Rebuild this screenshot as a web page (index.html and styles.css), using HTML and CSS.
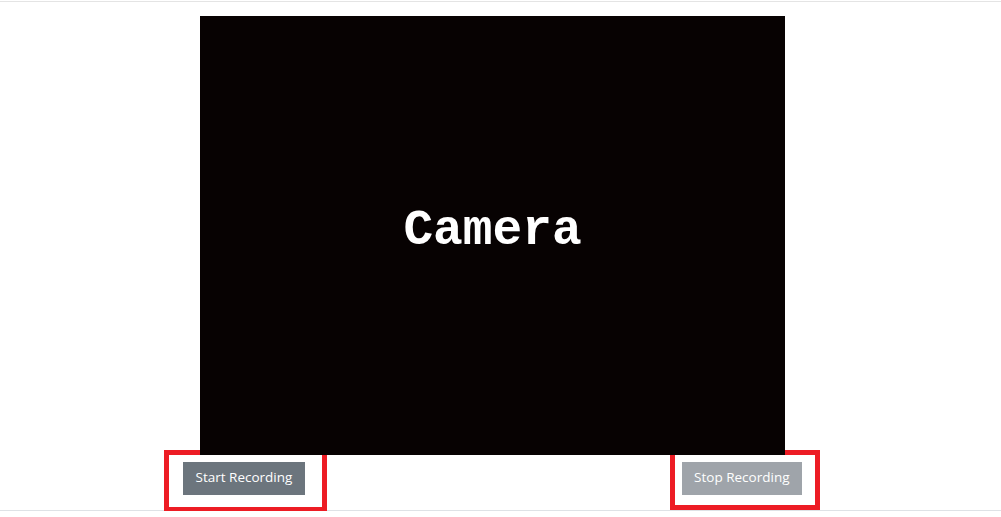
FILE: index.html
```html
<!DOCTYPE html>
<html lang="en">
<head>
<meta charset="utf-8">
<title>Camera Recorder</title>
<link rel="stylesheet" href="styles.css">
</head>
<body>
<main class="page">
  <section class="camera">
    <span class="camera-label">Camera</span>
  </section>
  <div class="controls">
    <div class="mark mark-start">
      <button class="btn" type="button">Start Recording</button>
    </div>
    <div class="mark mark-stop">
      <button class="btn btn-disabled" type="button" disabled>Stop Recording</button>
    </div>
  </div>
</main>
</body>
</html>
```

FILE: styles.css
```css
html, body {
  margin: 0;
  padding: 0;
  background: #ffffff;
}

body {
  padding-top: 1px;
  font-family: "Open Sans", "Liberation Sans", sans-serif;
}

.page {
  border-top: 1px solid #e4e4e4;
  border-bottom: 1px solid #dee2e6;
  padding-top: 14px;
}

.camera {
  position: relative;
  z-index: 1;
  width: 585px;
  height: 439px;
  margin-left: 200px;
  background: #070202;
  display: flex;
  align-items: center;
  justify-content: center;
}

.camera-label {
  font-family: "Liberation Mono", "DejaVu Sans Mono", monospace;
  font-weight: bold;
  font-size: 49.5px;
  color: #ffffff;
  margin-top: -10px;
}

.controls {
  display: flex;
  justify-content: space-between;
  align-items: flex-start;
  width: 656px;
  height: 60px;
  margin-top: -5px;
  margin-left: 164px;
}

.mark {
  border: 5px solid #ed1c24;
  display: flex;
  align-items: flex-start;
}

.mark-start {
  padding: 7px 17px 12px 14px;
}

.mark-stop {
  padding: 7px 13px 10px 7px;
}

.btn {
  height: 33px;
  padding: 0 12.5px 3px;
  border: 0;
  border-radius: 0;
  background: #6c757d;
  color: #ffffff;
  font-family: "Open Sans", "Liberation Sans", sans-serif;
  font-size: 13.5px;
  display: flex;
  align-items: center;
  justify-content: center;
}

.btn-disabled {
  opacity: 0.65;
}
```
